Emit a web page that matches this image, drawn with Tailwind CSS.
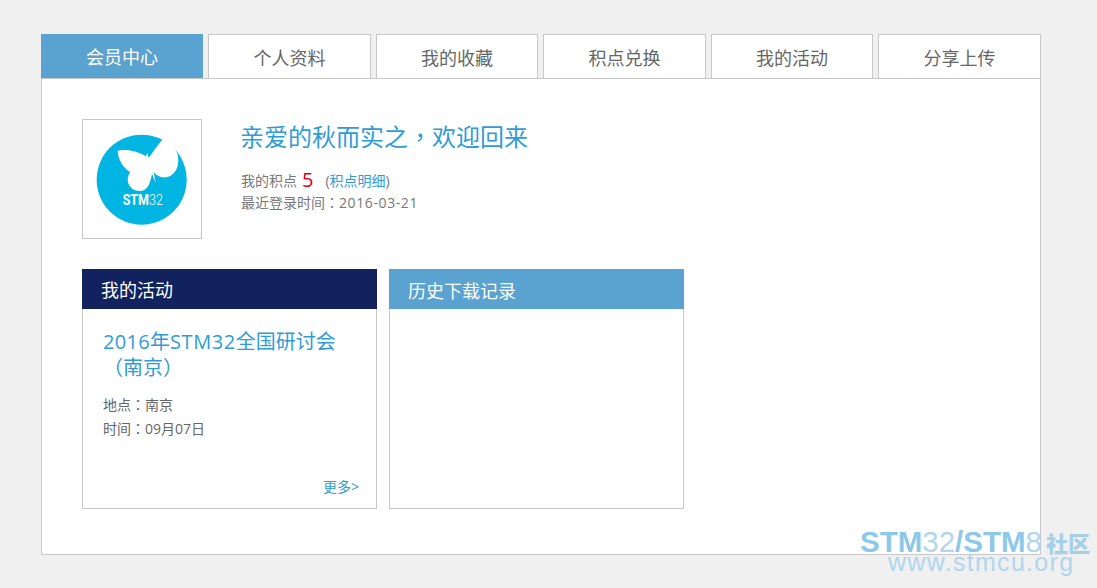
<!DOCTYPE html>
<html lang="zh-CN">
<head>
  <meta charset="UTF-8">
  <title>会员中心</title>
  <script src="https://cdn.jsdelivr.net/npm/@tailwindcss/browser@4"></script>
</head>
<body class="bg-[#f0f0f0] text-[#666] font-['Open_Sans','Noto_Sans_CJK_SC',sans-serif]">
  <div class="relative h-[588px] w-[1097px] overflow-hidden">
    <div class="ml-[41px] w-[1000px] pt-[34px]">
      <!-- tabs -->
      <nav class="grid h-[44px] grid-cols-[162px_163px_162px_163px_162px_163px] grid-rows-[44px] gap-[5px] text-center text-[18px] leading-[46px]">
        <a class="bg-[#5aa2d0] text-white">会员中心</a>
        <a class="border border-b-0 border-[#c8c8c8] bg-white">个人资料</a>
        <a class="border border-b-0 border-[#c8c8c8] bg-white">我的收藏</a>
        <a class="border border-b-0 border-[#c8c8c8] bg-white">积点兑换</a>
        <a class="border border-b-0 border-[#c8c8c8] bg-white">我的活动</a>
        <a class="border border-b-0 border-[#c8c8c8] bg-white">分享上传</a>
      </nav>

      <main class="h-[477px] border border-[#c8c8c8] bg-white pl-[40px] pt-[40px]">
        <!-- user -->
        <section class="flex h-[120px] gap-[39px]">
          <div class="h-[120px] w-[120px] border border-[#c8c8c8]">
            <svg class="-ml-px -mt-px" width="120" height="120" viewBox="-9 -9 360 360">
              <circle cx="170" cy="173" r="135" fill="#00b5e2"/>
              <path fill="#fff" d="M98 86C125 80 160 88 183 103L187 92L191 108C205 88 222 62 240 44L266 76C280 92 284 115 276 138C268 158 250 170 228 165C218 162 210 156 206 150L212 182L201 155C198 172 192 196 178 204C160 212 136 204 130 184C126 170 130 158 136 150C118 142 98 112 98 86Z"/>
              <text transform="translate(113 249) scale(.85 1)" font-family="Roboto" font-size="44" fill="#fff"><tspan font-weight="700">STM</tspan><tspan font-weight="300">32</tspan></text>
            </svg>
          </div>
          <div>
            <h1 class="-ml-px text-[24px] leading-[36px] text-[#2f9cd6]">亲爱的秋而实之<span lang="zh-TW" class="font-['Noto_Sans_CJK_TC',sans-serif] leading-none">，</span>欢迎回来</h1>
            <p class="mt-[13px] flex h-[24px] items-center text-[14px] text-[#777]">
              我的积点<span class="ml-[5px] mr-[12px] text-[20px] leading-none text-[#d0021b]">5</span>(<span class="text-[#2f9cd6]">积点明细</span>)
            </p>
            <p class="mt-px text-[14px] leading-[20px] text-[#777]">最近登录时间<span lang="zh-TW" class="font-['Noto_Sans_CJK_TC',sans-serif] leading-none">：</span><span class="tracking-[0.6px]">2016-03-21</span></p>
          </div>
        </section>

        <!-- cards -->
        <section class="mt-[30px] flex gap-[12px]">
          <article class="h-[240px] w-[295px] border border-t-0 border-[#c8c8c8]">
            <h2 class="-mx-px h-[40px] bg-[#12225e] pl-[19px] text-[18px] leading-[42px] text-white">我的活动</h2>
            <div class="relative h-[199px] pl-[20px] pr-[30px] pt-[20px]">
              <h3 class="text-[20px] leading-[26px] text-[#2f9cd6]"><span class="tracking-[0.3px]">2016</span>年<span class="tracking-[0.6px]">STM32</span>全国研讨会<span lang="zh-TW" class="font-['Noto_Sans_CJK_TC',sans-serif] leading-none">（</span>南京<span lang="zh-TW" class="font-['Noto_Sans_CJK_TC',sans-serif] leading-none">）</span></h3>
              <p class="mt-[12px] text-[14px] leading-[24px] text-[#666]">地点<span lang="zh-TW" class="font-['Noto_Sans_CJK_TC',sans-serif] leading-none">：</span>南京</p>
              <p class="text-[14px] leading-[24px] text-[#666]">时间<span lang="zh-TW" class="font-['Noto_Sans_CJK_TC',sans-serif] leading-none">：</span>09月07日</p>
              <a class="absolute bottom-[11px] right-[17px] text-[14px] leading-[20px] text-[#2f9cd6]">更多&gt;</a>
            </div>
          </article>
          <article class="h-[240px] w-[295px] border border-t-0 border-[#c8c8c8]">
            <h2 class="-mx-px h-[40px] bg-[#5aa2d0] pl-[19px] text-[18px] leading-[44px] text-white">历史下载记录</h2>
          </article>
        </section>
      </main>
    </div>

    <!-- watermark -->
    <div class="absolute left-[860px] top-[529px] w-[237px] font-['Liberation_Sans',sans-serif] text-[#8cc8ea]">
      <div class="flex h-[26px] items-center whitespace-nowrap text-[29.5px] leading-[26px]">
        <span class="font-bold">STM</span><span class="font-light text-[#b0d6ee]">32</span><span class="font-bold">/STM</span><span class="text-[#b0d6ee]">8</span><span class="ml-[4px] font-['Noto_Sans_CJK_SC',sans-serif] text-[22px] font-black text-[#a5cfe9]">社区</span>
      </div>
      <div class="ml-[28px] whitespace-nowrap text-[25px] leading-[15px] tracking-[1.3px] text-[#b0d6ee]">www.stmcu.org</div>
    </div>
  </div>
</body>
</html>
